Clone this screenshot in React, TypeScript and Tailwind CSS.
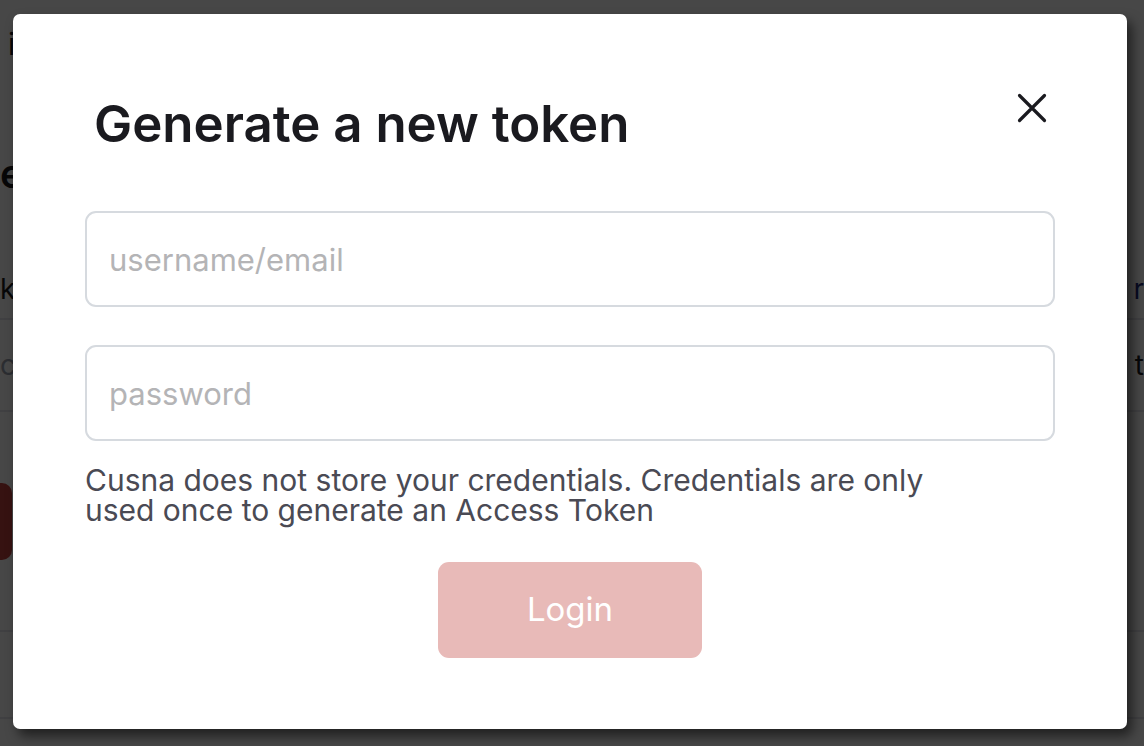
import type { FC } from "react";

const CloseIcon: FC = () => (
  <svg width="30" height="30" viewBox="0 0 30 30" fill="none">
    <path
      d="M2.5 2.5L27.5 27.5M27.5 2.5L2.5 27.5"
      stroke="#1a1a1f"
      strokeWidth="3.2"
      strokeLinecap="round"
    />
  </svg>
);

// the page that sits behind the dimmed overlay, mostly hidden by the modal
const BackgroundPage: FC = () => (
  <div className="h-[746px] bg-white text-[28px] text-[#1a1a1f]">
    <div className="h-[150px] pl-[8px] pt-[26px] text-[30px] leading-[36px]">i</div>
    <div className="h-[100px] pl-[0px] text-[40px] font-semibold leading-[48px]">e</div>
    <div className="flex h-[70px] items-end justify-between border-b-2 border-[#e5e7eb] pb-[12px] leading-[34px]">
      <span>k</span>
      <span className="text-[#1e2a78]">r</span>
    </div>
    <div className="flex h-[92px] items-center justify-between border-b-2 border-[#e5e7eb]">
      <span className="text-[#9ca3af]">c</span>
      <span>t</span>
    </div>
    <div className="mt-[71px] h-[77px] w-[12px] rounded-r-[10px] bg-[#c2433f]" />
    <div className="h-[72px] border-b-2 border-[#e5e7eb]" />
    <div className="h-[87px] border-b-2 border-[#e5e7eb]" />
  </div>
);

export default function App() {
  return (
    <div className="relative h-[746px] w-[1144px] overflow-hidden font-['Inter',sans-serif]">
      <BackgroundPage />
      <div className="absolute inset-0 bg-black/[0.72]">
        <div className="ml-[13px] mt-[14px] flex h-[715px] w-[1114px] flex-col rounded-[7px] bg-white px-[72px] pt-[70px] shadow-[5px_7px_12px_rgba(0,0,0,0.55)]">
          <div className="flex items-start justify-between">
            <h2 className="pl-[9px] pt-[10px] text-[51px] font-semibold leading-[60px] text-[#1a1a1f]">
              Generate a new token
            </h2>
            <button className="mr-[8px] mt-[9px]">
              <CloseIcon />
            </button>
          </div>
          <div className="mt-[57px] flex flex-col gap-[38px]">
            <input
              placeholder="username/email"
              className="h-[96px] w-full rounded-[11px] border-2 border-[#d6dadf] px-[22px] text-[31px] text-[#1a1a1f] outline-none placeholder:text-[#b4b4b6]"
            />
            <input
              type="password"
              placeholder="password"
              className="h-[96px] w-full rounded-[11px] border-2 border-[#d6dadf] px-[22px] text-[31px] text-[#1a1a1f] outline-none placeholder:text-[#b4b4b6]"
            />
          </div>
          <p className="mt-[24px] max-w-[880px] text-[30px] leading-[30px] text-[#4a4a54]">
            Cusna does not store your credentials. Credentials are only used once to generate an Access Token
          </p>
          <div className="mt-[37px] flex justify-center">
            <button className="h-[96px] w-[264px] rounded-[11px] bg-[#e8bab8] text-[33px] font-normal text-white">
              Login
            </button>
          </div>
        </div>
      </div>
    </div>
  );
}
